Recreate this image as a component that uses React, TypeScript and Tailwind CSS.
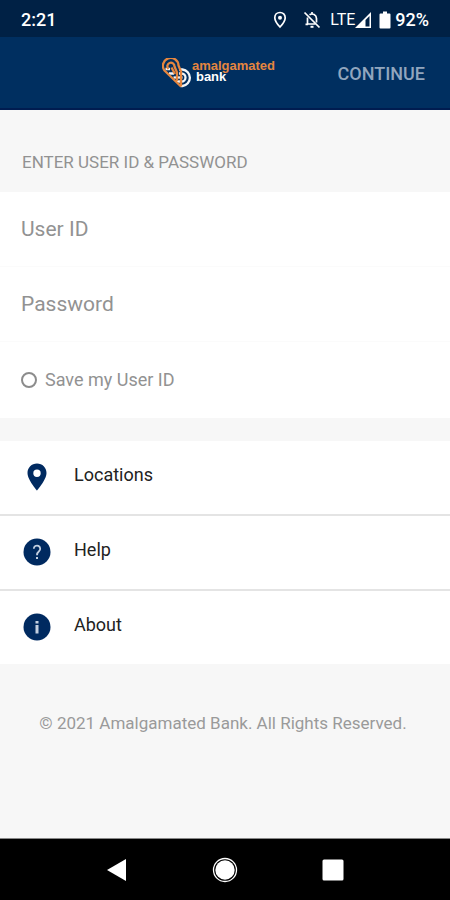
import React from 'react';

interface IconProps {
  className?: string;
}

const PinIcon: React.FC<IconProps> = ({ className }) => (
  <svg viewBox="0 0 20 28" className={className} aria-hidden="true">
    <path
      fill="currentColor"
      fillRule="evenodd"
      d="M10 0.5C4.6 0.5 0.5 4.7 0.5 10c0 6.8 9.5 17.5 9.5 17.5S19.5 16.8 19.5 10C19.5 4.7 15.4 0.5 10 0.5Zm0 6a3.7 3.7 0 1 1 0 7.4a3.7 3.7 0 0 1 0-7.4Z"
    />
  </svg>
);

const HelpIcon: React.FC<IconProps> = ({ className }) => (
  <svg viewBox="0 0 28 28" className={className} aria-hidden="true">
    <circle cx="14" cy="14" r="13.5" fill="currentColor" />
    <path d="M10.8 10.8a3.2 3.2 0 1 1 5.2 2.5c-1.3 1-2 1.9-2 3.9" fill="none" stroke="#c3cfe0" strokeWidth="1.8" />
    <rect x="13" y="19" width="2" height="2" fill="#c3cfe0" />
  </svg>
);

const InfoIcon: React.FC<IconProps> = ({ className }) => (
  <svg viewBox="0 0 28 28" className={className} aria-hidden="true">
    <circle cx="14" cy="14" r="13.5" fill="currentColor" />
    <rect x="12.5" y="8" width="3" height="2.5" fill="#c3cfe0" />
    <rect x="12.5" y="12" width="3" height="8.5" fill="#c3cfe0" />
  </svg>
);

const LogoMark: React.FC<IconProps> = ({ className }) => (
  <svg viewBox="0 0 30 30" className={className} fill="none" aria-hidden="true">
    <g stroke="#f4f6f8" strokeWidth="2.3">
      <path d="M3.5 11H8M17 11.5H20.5A8.3 8.3 0 0 1 20.5 28H18.5" />
      <path d="M7 15.5H12M17 15.5H19.5A4 4 0 0 1 19.500 23.5H14.500" />
      <path d="M11.5 19.500H20.500" />
    </g>
    <g stroke="#e5863f" strokeWidth="2.3">
      <path d="M19 28.5L2.500 12.500A7.800 7.800 0 1 1 16.500 7.500L19 13.500V28.500" />
      <path d="M6.500 11A3.600 3.600 0 1 1 12.500 8.500L15 14.500V23" />
      <path d="M9.500 9.500L13 16" />
    </g>
  </svg>
);

const StatusBar = () => (
  <div className="flex h-[37px] items-center justify-between bg-[#002145] pt-1 pr-5 pb-[2px] pl-[21px] text-white">
    <span className="text-[18px] leading-5 font-medium">2:21</span>
    <div className="flex items-center">
      <svg viewBox="0 0 14 18" className="mr-4 h-[18px] w-[14px]" aria-hidden="true">
        <path d="M7 1.5c-3 0-5.2 2.2-5.2 5.2C1.8 10.5 7 16 7 16s5.2-5.5 5.2-9.3C12.2 3.7 10 1.5 7 1.5Z" fill="none" stroke="currentColor" strokeWidth="1.7" />
        <circle cx="7" cy="6.7" r="2" fill="currentColor" />
      </svg>
      <svg viewBox="0 0 18 18" className="mr-[9px] h-[18px] w-[18px]" fill="none" stroke="currentColor" strokeWidth="1.7" aria-hidden="true">
        <path d="M1.5 1.5L16.5 16.5" />
        <path d="M6.5 3.8A4.5 4.5 0 0 1 13.5 7.5V11.5M4.5 6.5V13H12.5M2.5 13.3H5M9 3V1" />
        <path d="M7.5 15.8H10.5" strokeWidth="2" />
      </svg>
      <span className="text-[16px] leading-5">LTE</span>
      <svg viewBox="0 0 16 16" className="h-4 w-4" aria-hidden="true">
        <path d="M0 16L16 0V16Z" fill="currentColor" />
        <path d="M10.5 8L14.5 4V14.5H10.5Z" fill="#002145" />
      </svg>
      <svg viewBox="0 0 12 18" className="mr-1 ml-2 h-[18px] w-3" aria-hidden="true">
        <path d="M4 0.5H8V2.5H10.5Q11.5 2.5 11.5 3.5V16.5Q11.5 17.5 10.5 17.5H1.5Q0.5 17.5 0.5 16.5V3.5Q0.5 2.5 1.5 2.5H4Z" fill="currentColor" />
      </svg>
      <span className="pr-px text-[18px] leading-5 font-medium">92%</span>
    </div>
  </div>
);

const Header = () => (
  <header className="grid h-[73px] grid-cols-[1fr_auto_1fr] items-center border-b-2 border-[#001c50] bg-[#002f60] pr-[25px] pl-[12px]">
    <div />
    <div className="flex items-center">
      <LogoMark className="h-[30px] w-[30px]" />
      <div className="flex flex-col pb-1 font-['Liberation_Sans',sans-serif] text-[13px] leading-[11px] font-bold">
        <span className="text-[#e5863f]">amalgamated</span>
        <span className="pl-1 text-white">bank</span>
      </div>
    </div>
    <button type="button" className="justify-self-end pt-[2px] text-[18px] leading-6 font-medium text-[#91a6be]">
      CONTINUE
    </button>
  </header>
);

const fields = [
  { id: 'user-id', label: 'User ID', type: 'text' },
  { id: 'password', label: 'Password', type: 'password' },
];

const LoginForm = () => (
  <form>
    <h1 className="px-[22px] pt-[42px] pb-[19px] text-[17px] leading-[21px] text-[#929292]">
      ENTER USER ID &amp; PASSWORD
    </h1>
    <div className="bg-white">
      {fields.map((field) => (
        <input
          key={field.id}
          id={field.id}
          type={field.type}
          placeholder={field.label}
          aria-label={field.label}
          className="block h-[75px] w-full border-b border-[#fbfbfb] px-[21px] text-[21px] text-[#444444] placeholder:text-[#929292] placeholder:opacity-100"
        />
      ))}
      <div className="flex h-[76px] items-center gap-2 px-[21px]">
        <input
          id="save-user"
          type="checkbox"
          className="h-4 w-4 appearance-none rounded-full border-2 border-[#8c8c8c] checked:bg-[#002f60]"
        />
        <label htmlFor="save-user" className="text-[18px] leading-6 text-[#929292]">
          Save my User ID
        </label>
      </div>
    </div>
  </form>
);

const links = [
  { label: 'Locations', icon: <PinIcon className="h-7 w-5" /> },
  { label: 'Help', icon: <HelpIcon className="h-7 w-7" /> },
  { label: 'About', icon: <InfoIcon className="h-7 w-7" /> },
];

const LinkList = () => (
  <nav className="mt-[23px] divide-y-2 divide-[#e4e4e4] bg-white">
    {links.map((link) => (
      <a key={link.label} href="#" className="flex h-[75px] items-center pb-[2px] pl-[23px] text-[18px] text-[#222222] last:h-[73px]">
        <span className="mr-[23px] flex w-7 justify-center text-[#002a60]">{link.icon}</span>
        <span className="pb-1">{link.label}</span>
      </a>
    ))}
  </nav>
);

const NavBar = () => (
  <div className="flex h-[62px] items-center justify-center gap-[84px] border-t border-[#888888] bg-black text-white">
    <button type="button" aria-label="Back">
      <svg viewBox="0 0 24 24" className="h-6 w-6" fill="currentColor">
        <path d="M3 12L22 1V23Z" />
      </svg>
    </button>
    <button type="button" aria-label="Home">
      <svg viewBox="0 0 26 26" className="h-[26px] w-[26px]">
        <circle cx="13" cy="13" r="11.5" fill="none" stroke="currentColor" strokeWidth="1.3" />
        <circle cx="13" cy="13" r="9.7" fill="currentColor" />
      </svg>
    </button>
    <button type="button" aria-label="Recent apps">
      <svg viewBox="0 0 24 24" className="h-6 w-6" fill="currentColor">
        <rect x="0.5" y="1.5" width="21" height="21" rx="1.5" />
      </svg>
    </button>
  </div>
);

const App: React.FC = () => (
  <div className="flex min-h-screen flex-col bg-[#f7f7f7] font-['Roboto','Liberation_Sans',sans-serif]">
    <StatusBar />
    <Header />
    <main className="flex-1">
      <LoginForm />
      <LinkList />
      <p className="pt-[47px] pr-4 pb-8 pl-3 text-center text-[17px] leading-6 text-[#9a9a9a]">
        © 2021 Amalgamated Bank. All Rights Reserved.
      </p>
    </main>
    <NavBar />
  </div>
);

export default App;
